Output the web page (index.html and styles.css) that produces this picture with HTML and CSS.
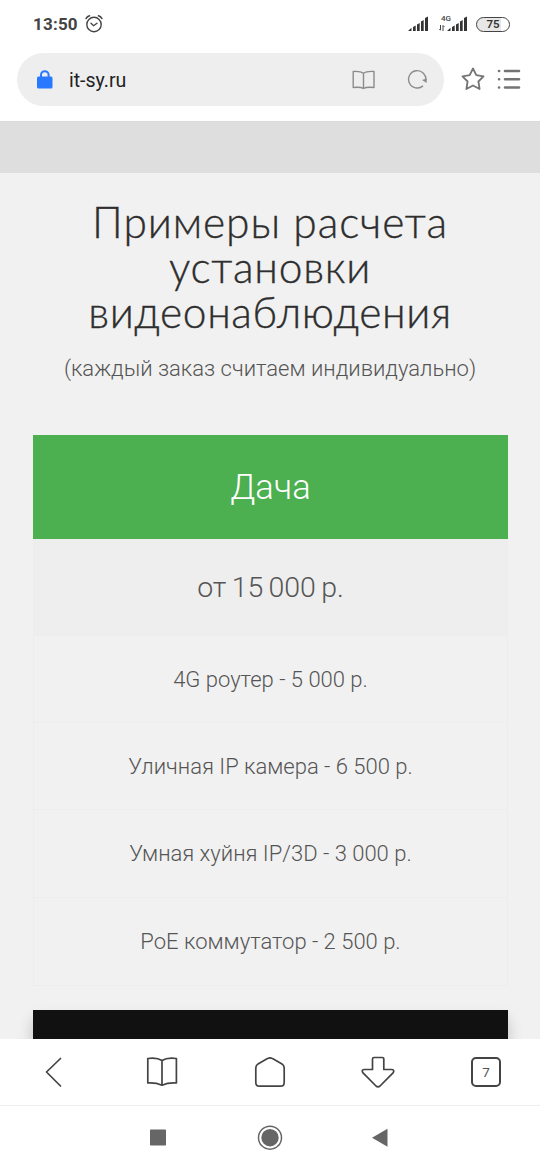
FILE: index.html
```html
<!DOCTYPE html>
<html lang="ru">
<head>
<meta charset="utf-8">
<title>it-sy.ru</title>
<link rel="stylesheet" href="styles.css">
</head>
<body>
<div class="phone">
  <header class="status">
    <span class="clock">13:50</span>
    <svg class="alarm" width="20" height="20" viewBox="0 0 20 20" fill="none" stroke="#444" stroke-width="1.4" stroke-linecap="round"><circle cx="10" cy="10.5" r="7.2"/><path d="M2 4.6Q3.2 2.4 5.6 1.8M18 4.6Q16.800 2.400 14.400 1.800M7 9.300L9.600 11.700L13 9.300"/></svg>
    <svg class="signal" width="21" height="16" viewBox="0 0 21 16" fill="#333"><path d="M0 15L3.500 11.700V15ZM5 11L7.700 9.500V15H5ZM9 8.500L11.700 7V15H9ZM13 5.500L15.700 4V15H13ZM17 2L20 .5V15H17Z"/></svg>
    <div class="mobile">
      <span class="network">4G</span>
      <svg class="data" width="6" height="6" viewBox="0 0 6 6" stroke="#444" fill="none"><path d="M1.500 0V5M.3 4L1.500 5.300M4 6V.5M4 .5L5.500 2"/></svg>
      <svg class="signal" width="21" height="16" viewBox="0 0 21 16" fill="#333"><path d="M0 15L3.500 11.700V15ZM5 11L7.700 9.500V15H5ZM9 8.500L11.700 7V15H9ZM13 5.500L15.700 4V15H13ZM17 2L20 .5V15H17Z"/></svg>
    </div>
    <span class="battery">75</span>
  </header>
  <div class="toolbar">
    <div class="address">
      <svg class="lock" width="16" height="20" viewBox="0 0 16 20"><path d="M4 8V5a3.800 3.800 0 0 1 7.600 0V8" fill="none" stroke="#2979ff" stroke-width="2"/><rect y="6.500" width="15.500" height="12" rx="1.500" fill="#2979ff"/></svg>
      <span class="url">it-sy.ru</span>
      <svg class="reader" width="24" height="20" viewBox="0 0 24 20" fill="none" stroke="#8b8b8b" stroke-width="1.400" stroke-linejoin="round"><path d="M11.500 3.300Q8.500 1 1.200 1.500V17.500Q8.500 16.700 11.500 18.500Q14.500 16.700 22 17.500V1.500Q14.500 1 11.500 3.300V18.500"/></svg>
      <svg class="reload" width="21" height="21" viewBox="0 0 21 21"><path d="M16 16.900A8.700 8.700 0 1 1 18.900 11.500" fill="none" stroke="#8b8b8b" stroke-width="1.400"/><path d="M15 11L19.600 14L19.600 9.500Z" fill="#8b8b8b"/></svg>
    </div>
    <svg class="star" width="24" height="24" viewBox="0 0 24 24" fill="none" stroke="#747474" stroke-width="1.800" stroke-linejoin="round"><path d="M12 1.500L15.300 8.200L22.500 9.300L17.400 14.500L18.600 22L12 18.500L5.400 22L6.600 14.500L1.500 9.300L8.700 8.200Z"/></svg>
    <svg class="menu" width="24" height="22" viewBox="0 0 24 22" stroke="#747474" stroke-width="2.600" stroke-linecap="round"><path d="M2 3H2.100M8 3H22M2 11.200H2.100M8 11.200H22M2 19.500H2.100M8 19.500H22"/></svg>
  </div>
  <main class="page">
    <div class="band"></div>
    <h1 class="title"><span class="line first">Примеры расчета</span><span class="line second">установки</span><span class="line third">видеонаблюдения</span></h1>
    <p class="subtitle">(каждый заказ считаем индивидуально)</p>
    <section class="plan">
      <h2 class="plan-name">Дача</h2>
      <div class="price">от 15 000 р.</div>
      <ul class="items">
        <li class="item">4G роутер - 5 000 р.</li>
        <li class="item">Уличная IP камера - 6 500 р.</li>
        <li class="item">Умная хуйня IP/3D - 3 000 р.</li>
        <li class="item">PoE коммутатор - 2 500 р.</li>
      </ul>
    </section>
    <section class="next-plan"></section>
  </main>
  <nav class="browser-nav">
    <svg width="36" height="36" viewBox="0 0 36 36"><path d="M24.500 4.500L10.500 18L24.500 32"/></svg>
    <svg width="36" height="36" viewBox="0 0 36 36"><path d="M18 6.500Q13 3.200 3.800 4.500V29Q12 28.500 18 31.200Q24 28.500 32.400 29V4.500Q23 3.200 18 6.500V31.200"/></svg>
    <svg width="36" height="36" viewBox="0 0 36 36"><path d="M15.500 4.600Q18 3 20.500 4.600L30 10Q32.200 11.300 32.200 14V28.500Q32.200 32.200 28.500 32.200H7.500Q3.800 32.200 3.800 28.500V14Q3.800 11.300 6 10Z"/></svg>
    <svg width="36" height="36" viewBox="0 0 36 36"><path d="M12.500 15.500V5Q12.500 3.500 14 3.500H22Q23.800 3.500 23.800 5V15.500H32Q34.700 16 33.300 18.700L20 32Q18 33.700 16 32L2.800 18.700Q1.200 16 4 15.500Z"/></svg>
    <div class="tabs"><span class="tab-count">7</span></div>
  </nav>
  <footer class="system-nav">
    <svg width="26" height="26" viewBox="0 0 26 26"><rect x="5" y="4.500" width="16" height="16" rx=".7" fill="#666"/></svg>
    <svg width="26" height="26" viewBox="0 0 26 26"><circle cx="13" cy="12.700" r="11.500" fill="none" stroke="#666" stroke-width="1.500"/><circle cx="13" cy="12.700" r="8.700" fill="#666"/></svg>
    <svg width="26" height="26" viewBox="0 0 26 26"><path d="M3 12.800L18.500 3.800V21.800Z" fill="#666"/></svg>
  </footer>
</div>
</body>
</html>
```

FILE: styles.css
```css
* { box-sizing: border-box; }
body { margin: 0; background: #fff; font-family: Roboto, sans-serif; }
svg { display: block; flex: none; }
.phone { width: 540px; height: 1170px; display: flex; flex-direction: column; overflow: hidden; }
.status { height: 48px; flex: none; display: flex; align-items: center; padding: 0 30px 0 33px; }
.clock { font-size: 17px; font-weight: 700; color: #444; letter-spacing: .2px; width: 51px; }
.alarm { margin-right: auto; }
.mobile { position: relative; display: flex; margin: 0 8px 0 18px; }
.network { position: absolute; left: -6px; top: -1px; font-size: 8px; line-height: 8px; font-weight: 500; color: #444; }
.data { position: absolute; left: -8px; bottom: 1px; }
.battery { width: 34px; height: 15px; border: 1.5px solid #444; border-radius: 8px; background: linear-gradient(90deg, #e7e7e7 75%, #fff 75%); font-size: 11.5px; line-height: 13px; font-weight: 600; text-align: center; color: #333; }
.toolbar { height: 73px; flex: none; display: flex; align-items: flex-start; padding: 5px 17px 0 17px; }
.address { width: 427px; flex: none; height: 53px; border-radius: 27px; background: #eee; display: flex; align-items: center; padding: 0 16px 0 20px; }
.url { font-size: 19.5px; color: #222; margin-left: 16px; padding-top: 2px; }
.reader { margin-left: auto; margin-right: 31px; }
.star { margin: 14px 12px 0 17px; }
.menu { margin-top: 15px; }
.page { height: 918px; flex: none; background: #f1f1f1; overflow: hidden; display: flex; flex-direction: column; }
.band { height: 52px; flex: none; background: #dedede; border-top: 1px solid #d9d9d9; }
.title { margin: 26px 0 0; text-align: center; font: 300 42.5px/45px Lato, "Open Sans", sans-serif; color: #2e2e2e; -webkit-text-stroke: .35px #2e2e2e; }
.line { display: block; white-space: nowrap; }
.first { letter-spacing: .9px; }
.second { letter-spacing: .8px; }
.third { letter-spacing: .6px; }
.subtitle { margin: 20px 0 0; text-align: center; font-size: 22px; line-height: 30px; font-weight: 300; color: #555; white-space: nowrap; }
.plan { margin: 51px 32px 0 33px; height: 551px; flex: none; border: 1px solid #ededed; border-top: 0; }
.plan-name { margin: 0 -1px; height: 104px; background: #4caf50; color: #fff; font-size: 34.5px; font-weight: 300; line-height: 104px; text-align: center; }
.price { height: 97px; background: #eee; color: #555; font-size: 28.5px; font-weight: 300; line-height: 98px; word-spacing: -1.7px; text-align: center; }
.items { margin: 0; padding: 0; list-style: none; }
.item { height: 87.5px; border-bottom: 1px solid #ededed; color: #555; font-size: 22px; font-weight: 300; line-height: 88px; text-align: center; white-space: nowrap; }
.item:first-child { height: 86.5px; line-height: 87px; }
.item:last-child { border-bottom: 0; }
.next-plan { margin: 24px 32px 0 33px; height: 90px; flex: none; background: #111; box-shadow: 0 9px 14px rgba(0,0,0,.2); }
.browser-nav { height: 67px; flex: none; background: #fff; border-bottom: 1px solid #eee; display: flex; justify-content: space-between; align-items: center; padding: 0 36px; position: relative; }
.browser-nav svg { fill: none; stroke: #444; stroke-width: 1.7; stroke-linejoin: round; stroke-linecap: round; }
.tabs { width: 30px; height: 30px; margin: 0 3px; border: 2px solid #444; border-radius: 5px; display: flex; align-items: center; justify-content: center; }
.tab-count { font-size: 13.5px; line-height: 18px; color: #555; }
.system-nav { height: 64px; display: flex; justify-content: center; align-items: center; gap: 86px; }
```
